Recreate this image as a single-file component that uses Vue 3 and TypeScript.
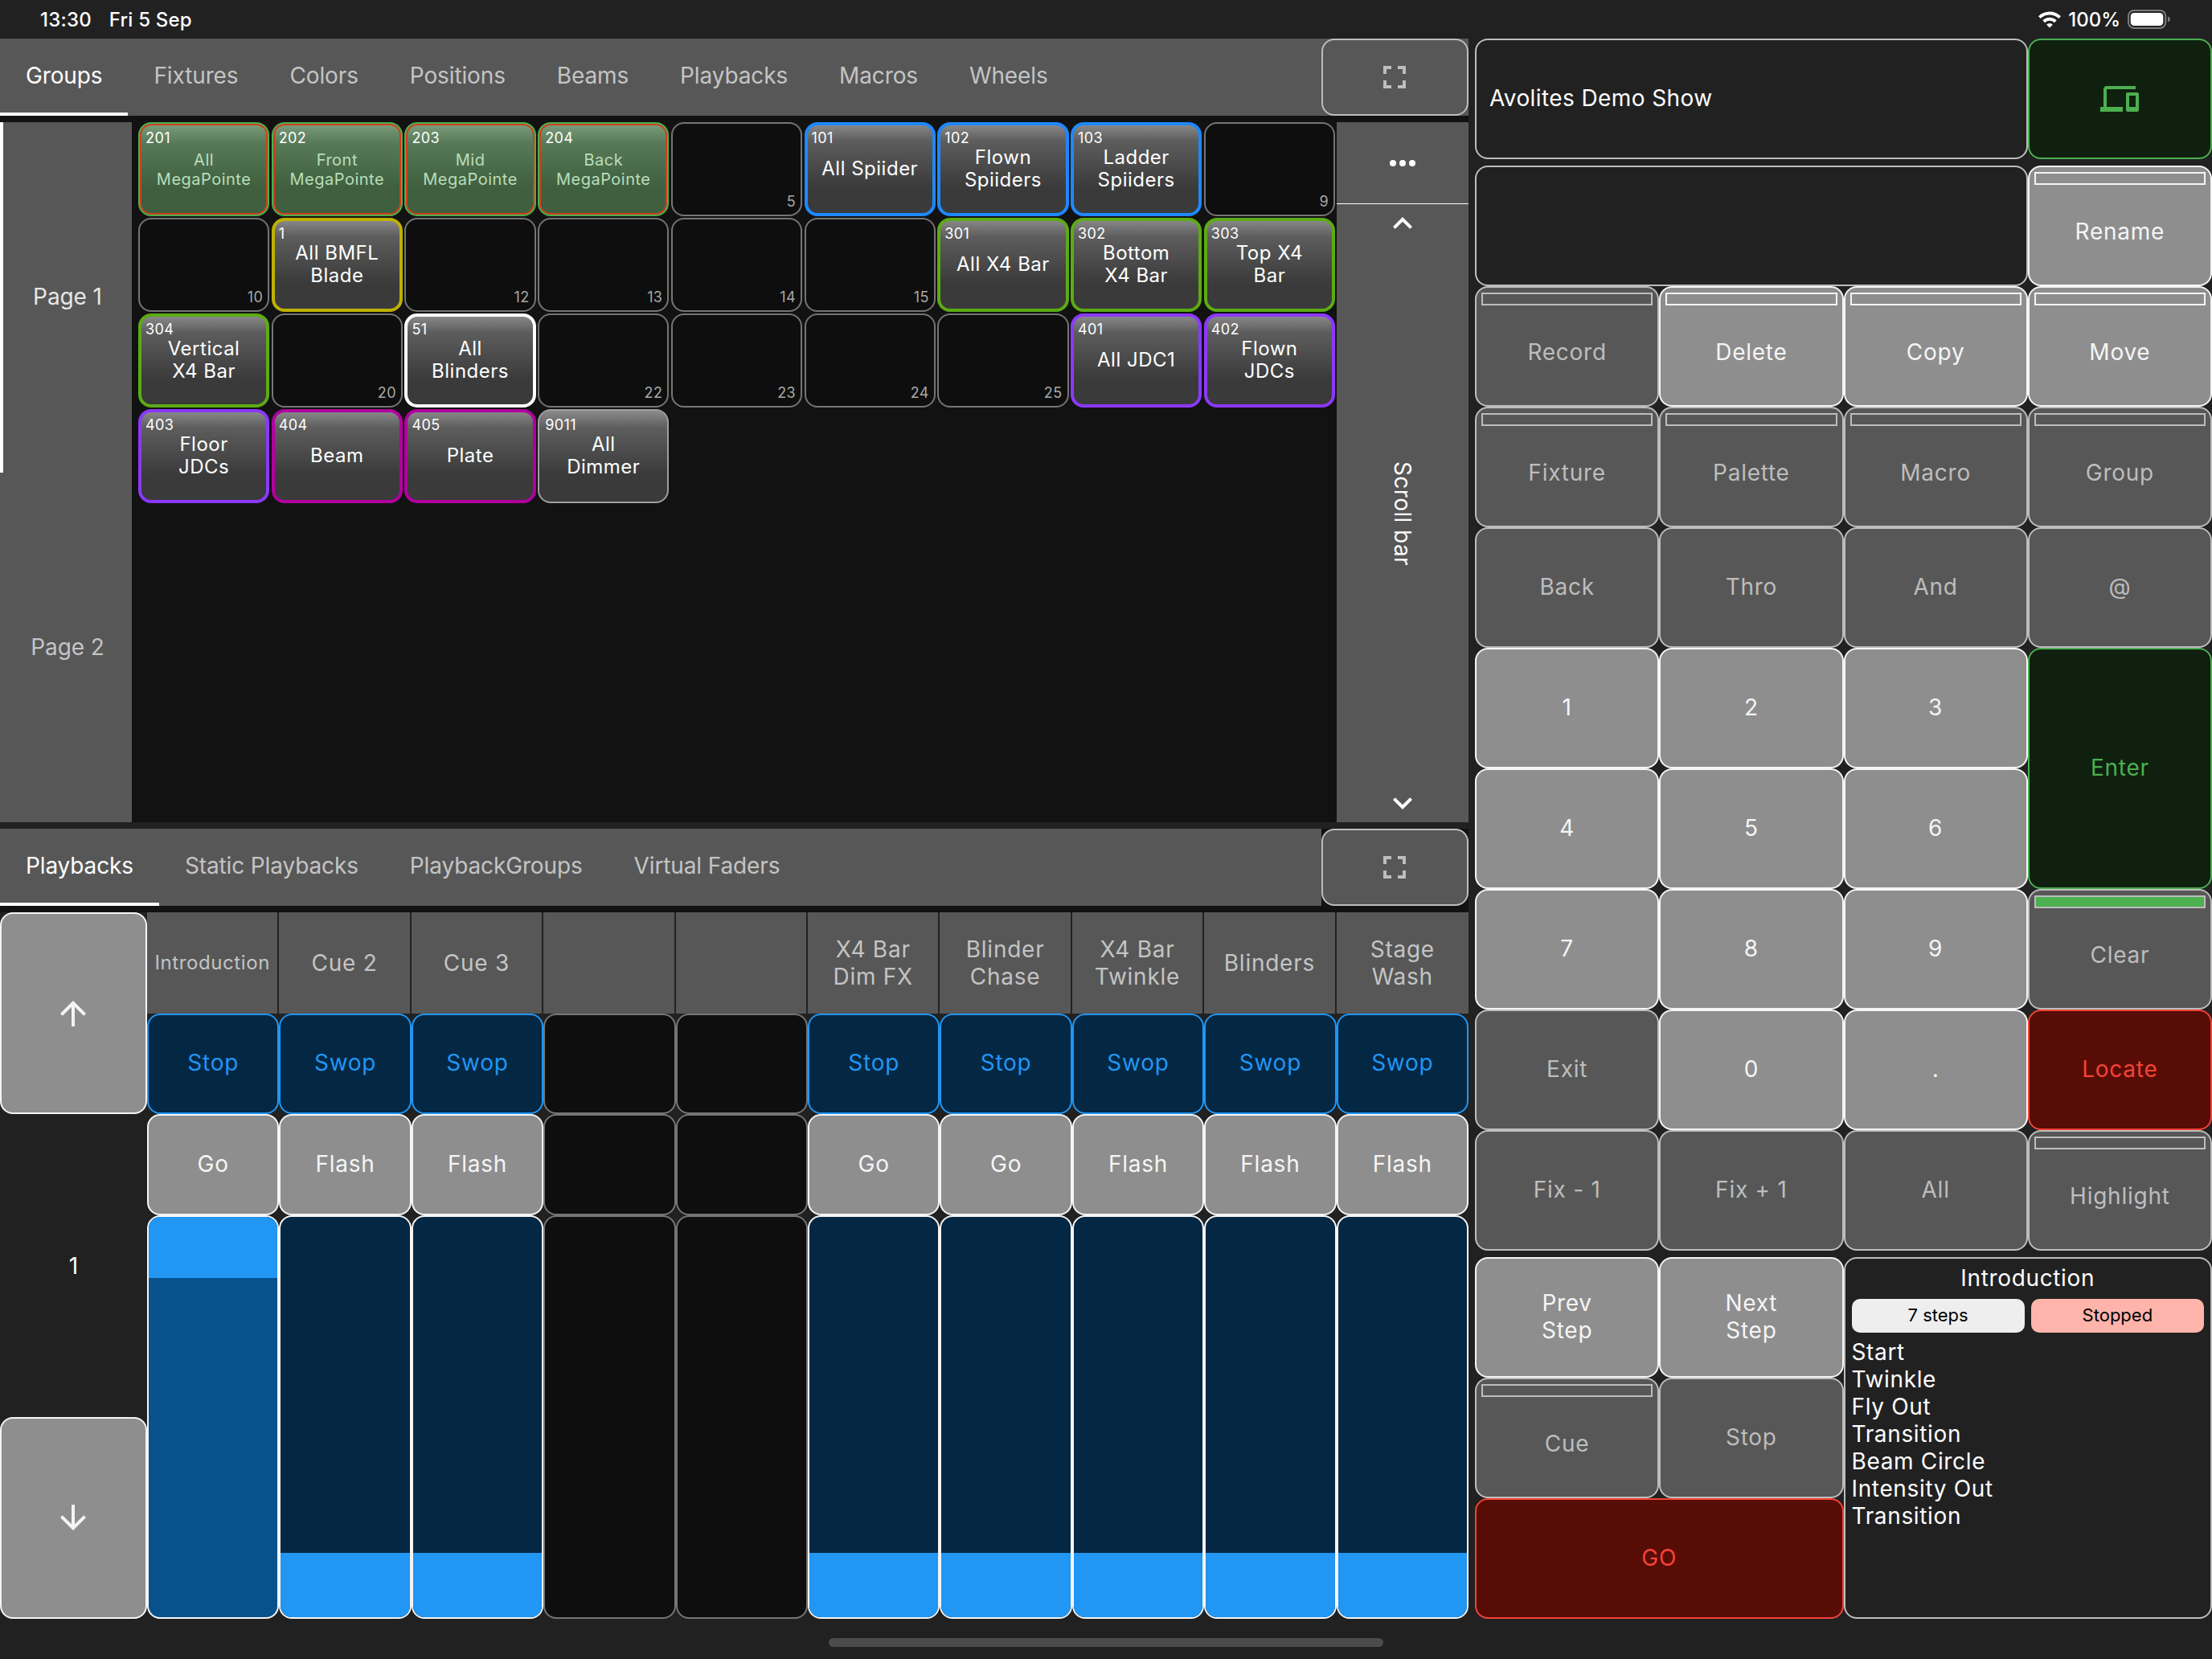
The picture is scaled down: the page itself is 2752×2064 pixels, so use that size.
<script setup lang="ts">
type Tone = 'dim' | 'lit' | 'green' | 'red'

interface Key {
  label: string
  tone: Tone
  led?: 'off' | 'on'
  tall?: boolean
}

interface Group {
  id: number
  label?: string
  color?: string
  selected?: boolean
}

interface Playback {
  name: string
  top: string
  bottom: string
  level: 'high' | 'low'
}

const groupTabs = ['Groups', 'Fixtures', 'Colors', 'Positions', 'Beams', 'Playbacks', 'Macros', 'Wheels']
const playbackTabs = ['Playbacks', 'Static Playbacks', 'PlaybackGroups', 'Virtual Faders']

const BLUE = '#1e88ff'
const LIME = '#5cab14'
const VIOLET = '#8b38ff'
const MAGENTA = '#b1009f'

const groups: Group[] = [
  { id: 201, label: 'All\nMegaPointe', selected: true },
  { id: 202, label: 'Front\nMegaPointe', selected: true },
  { id: 203, label: 'Mid\nMegaPointe', selected: true },
  { id: 204, label: 'Back\nMegaPointe', selected: true },
  { id: 5 },
  { id: 101, label: 'All Spiider', color: BLUE },
  { id: 102, label: 'Flown\nSpiiders', color: BLUE },
  { id: 103, label: 'Ladder\nSpiiders', color: BLUE },
  { id: 9 },
  { id: 10 },
  { id: 1, label: 'All BMFL\nBlade', color: '#beb100' },
  { id: 12 },
  { id: 13 },
  { id: 14 },
  { id: 15 },
  { id: 301, label: 'All X4 Bar', color: LIME },
  { id: 302, label: 'Bottom\nX4 Bar', color: LIME },
  { id: 303, label: 'Top X4\nBar', color: LIME },
  { id: 304, label: 'Vertical\nX4 Bar', color: LIME },
  { id: 20 },
  { id: 51, label: 'All\nBlinders', color: '#ffffff' },
  { id: 22 },
  { id: 23 },
  { id: 24 },
  { id: 25 },
  { id: 401, label: 'All JDC1', color: VIOLET },
  { id: 402, label: 'Flown\nJDCs', color: VIOLET },
  { id: 403, label: 'Floor\nJDCs', color: VIOLET },
  { id: 404, label: 'Beam', color: MAGENTA },
  { id: 405, label: 'Plate', color: MAGENTA },
  { id: 9011, label: 'All\nDimmer' },
]

const playbacks: (Playback | null)[] = [
  { name: 'Introduction', top: 'Stop', bottom: 'Go', level: 'high' },
  { name: 'Cue 2', top: 'Swop', bottom: 'Flash', level: 'low' },
  { name: 'Cue 3', top: 'Swop', bottom: 'Flash', level: 'low' },
  null,
  null,
  { name: 'X4 Bar Dim FX', top: 'Stop', bottom: 'Go', level: 'low' },
  { name: 'Blinder Chase', top: 'Stop', bottom: 'Go', level: 'low' },
  { name: 'X4 Bar Twinkle', top: 'Swop', bottom: 'Flash', level: 'low' },
  { name: 'Blinders', top: 'Swop', bottom: 'Flash', level: 'low' },
  { name: 'Stage Wash', top: 'Swop', bottom: 'Flash', level: 'low' },
]

const keys: Key[] = [
  { label: 'Record', tone: 'dim', led: 'off' },
  { label: 'Delete', tone: 'lit', led: 'off' },
  { label: 'Copy', tone: 'lit', led: 'off' },
  { label: 'Move', tone: 'lit', led: 'off' },
  { label: 'Fixture', tone: 'dim', led: 'off' },
  { label: 'Palette', tone: 'dim', led: 'off' },
  { label: 'Macro', tone: 'dim', led: 'off' },
  { label: 'Group', tone: 'dim', led: 'off' },
  { label: 'Back', tone: 'dim' },
  { label: 'Thro', tone: 'dim' },
  { label: 'And', tone: 'dim' },
  { label: '@', tone: 'dim' },
  { label: '1', tone: 'lit' },
  { label: '2', tone: 'lit' },
  { label: '3', tone: 'lit' },
  { label: 'Enter', tone: 'green', tall: true },
  { label: '4', tone: 'lit' },
  { label: '5', tone: 'lit' },
  { label: '6', tone: 'lit' },
  { label: '7', tone: 'lit' },
  { label: '8', tone: 'lit' },
  { label: '9', tone: 'lit' },
  { label: 'Clear', tone: 'dim', led: 'on' },
  { label: 'Exit', tone: 'dim' },
  { label: '0', tone: 'lit' },
  { label: '.', tone: 'lit' },
  { label: 'Locate', tone: 'red' },
  { label: 'Fix - 1', tone: 'dim' },
  { label: 'Fix + 1', tone: 'dim' },
  { label: 'All', tone: 'dim' },
  { label: 'Highlight', tone: 'dim', led: 'off' },
]

const cues = ['Start', 'Twinkle', 'Fly Out', 'Transition', 'Beam Circle', 'Intensity Out', 'Transition']
</script>

<template>
  <div class="screen">
    <header class="status">
      <div class="clock"><span>13:30</span><span>Fri 5 Sep</span></div>
      <div class="power">
        <svg class="wifi" viewBox="0 0 28 21">
          <path d="M14 20.6l3.9-3.9a5.6 5.6 0 0 0-7.8 0z" />
          <path d="M6.7 12.7a10.5 10.5 0 0 1 14.6 0" />
          <path d="M1.4 7.6a18 18 0 0 1 25.2 0" />
        </svg>
        <span>100%</span>
        <svg class="battery" viewBox="0 0 54 24">
          <rect x="1" y="1" width="46.3" height="22" rx="7" fill="none" stroke="#7b7b7b" stroke-width="2" />
          <rect x="3.7" y="4" width="40.6" height="16" rx="4.5" fill="#fff" />
          <path d="M50 8.5v7c4-1 4-6 0-7z" fill="#7b7b7b" />
        </svg>
      </div>
    </header>

    <main class="desk">
      <div class="left">
        <section class="pane groups-pane">
          <nav class="tabs">
            <div class="tab-list">
              <div v-for="(t, i) in groupTabs" :key="t" class="tab" :class="{ active: i === 0 }">{{ t }}</div>
            </div>
            <div class="expand">
              <svg viewBox="0 0 24 24"><path d="M7 14H5v5h5v-2H7v-3zm-2-4h2V7h3V5H5v5zm12 7h-3v2h5v-5h-2v3zM14 5v2h3v3h2V5h-5z" /></svg>
            </div>
          </nav>
          <div class="groups-body">
            <aside class="pages">
              <div class="page current">Page 1</div>
              <div class="page">Page 2</div>
            </aside>
            <div class="grid-wrap">
              <div class="grid">
                <div
                  v-for="g in groups"
                  :key="g.id"
                  class="cell"
                  :class="{ empty: !g.label, filled: g.label, selected: g.selected, colored: g.color }"
                  :style="g.color ? { borderColor: g.color } : undefined"
                >
                  <span class="num">{{ g.id }}</span>
                  <span v-if="g.label" class="name">{{ g.label }}</span>
                </div>
              </div>
            </div>
            <aside class="scroll">
              <div class="more"><i></i><i></i><i></i></div>
              <div class="track">
                <svg viewBox="0 0 24 24"><path d="M12 8l-6 6 1.41 1.41L12 10.83l4.59 4.58L18 14z" /></svg>
                <span>Scroll bar</span>
                <svg viewBox="0 0 24 24"><path d="M16.59 8.59L12 13.17 7.41 8.59 6 10l6 6 6-6z" /></svg>
              </div>
            </aside>
          </div>
        </section>

        <section class="pane playback-pane">
          <nav class="tabs split">
            <div class="tab-list">
              <div v-for="(t, i) in playbackTabs" :key="t" class="tab" :class="{ active: i === 0 }">{{ t }}</div>
            </div>
            <div class="expand">
              <svg viewBox="0 0 24 24"><path d="M7 14H5v5h5v-2H7v-3zm-2-4h2V7h3V5H5v5zm12 7h-3v2h5v-5h-2v3zM14 5v2h3v3h2V5h-5z" /></svg>
            </div>
          </nav>
          <div class="playback-body">
            <aside class="pager">
              <div class="key lit arrow">
                <svg viewBox="0 0 24 24"><path d="M4 12l1.41 1.41L11 7.83V20h2V7.83l5.58 5.59L20 12l-8-8-8 8z" /></svg>
              </div>
              <div class="page-no">1</div>
              <div class="key lit arrow">
                <svg viewBox="0 0 24 24"><path d="M20 12l-1.41-1.41L13 16.17V4h-2v12.17l-5.58-5.59L4 12l8 8 8-8z" /></svg>
              </div>
            </aside>
            <div class="faders">
              <div v-for="(p, i) in playbacks" :key="i" class="strip">
                <div class="legend" :class="{ small: p?.name === 'Introduction' }">{{ p?.name }}</div>
                <div class="key" :class="p ? 'blue' : 'void'">{{ p?.top }}</div>
                <div class="key" :class="p ? 'lit' : 'void'">{{ p?.bottom }}</div>
                <div class="fader" :class="p ? p.level : 'void'"><div v-if="p" class="handle"></div></div>
              </div>
            </div>
          </div>
        </section>
      </div>

      <aside class="right">
        <div class="row">
          <div class="panel title">Avolites Demo Show</div>
          <div class="key green icon-key">
            <svg class="devices" viewBox="0 0 24 24"><path d="M4 6h18V4H4c-1.1 0-2 .9-2 2v11H0v3h14v-3H4V6zm19 2h-6c-.55 0-1 .45-1 1v10c0 .55.45 1 1 1h6c.55 0 1-.45 1-1V9c0-.55-.45-1-1-1zm-1 9h-4v-7h4v7z" /></svg>
          </div>
        </div>
        <div class="block">
          <div class="row">
            <div class="panel"></div>
            <div class="key lit has-led"><i class="led"></i><span>Rename</span></div>
          </div>
          <div class="keys">
            <div v-for="k in keys" :key="k.label" class="key" :class="[k.tone, { tall: k.tall, 'has-led': k.led }]">
              <i v-if="k.led" class="led" :class="{ on: k.led === 'on' }"></i><span>{{ k.label }}</span>
            </div>
          </div>
        </div>
        <div class="transport">
          <div class="buttons">
            <div class="key lit"><span>Prev<br />Step</span></div>
            <div class="key lit"><span>Next<br />Step</span></div>
            <div class="key dim has-led"><i class="led"></i><span>Cue</span></div>
            <div class="key dim"><span>Stop</span></div>
            <div class="key red wide"><span>GO</span></div>
          </div>
          <div class="panel cue-list">
            <h2>Introduction</h2>
            <div class="chips">
              <div class="chip">7 steps</div>
              <div class="chip stopped">Stopped</div>
            </div>
            <div v-for="(c, i) in cues" :key="i" class="cue">{{ c }}</div>
          </div>
        </div>
      </aside>
    </main>
    <footer class="home"><i></i></footer>
  </div>
</template>

<style>
body {
  background: #212121;
}
</style>

<style scoped>
* {
  box-sizing: border-box;
}
.screen {
  width: 2752px;
  height: 2064px;
  background: #212121;
  color: #fff;
  font-family: Inter, 'Liberation Sans', sans-serif;
  font-size: 28px;
  font-weight: 400;
  display: flex;
  flex-direction: column;
  overflow: hidden;
}
.status {
  height: 48px;
  flex: none;
  display: flex;
  justify-content: space-between;
  align-items: center;
  padding: 0 51px 0 50px;
  font-size: 24px;
  font-weight: 500;
  letter-spacing: 0.2px;
}
.clock {
  display: flex;
  gap: 22px;
}
.power {
  display: flex;
  align-items: center;
  gap: 9px;
  letter-spacing: 0;
}
.wifi {
  width: 28px;
  height: 21px;
}
.wifi path {
  fill: none;
  stroke: #fff;
  stroke-width: 4;
}
.wifi path:first-child {
  fill: #fff;
  stroke: none;
}
.battery {
  width: 54px;
  height: 24px;
}
.desk {
  display: flex;
  height: 1966px;
  gap: 8px;
}
.left {
  width: 1827px;
  display: flex;
  flex-direction: column;
  gap: 8px;
}
.groups-pane {
  height: 975px;
}
.playback-pane {
  height: 983px;
}
.pane {
  background: #121212;
  display: flex;
  flex-direction: column;
  gap: 8px;
}
.tabs {
  height: 96px;
  flex: none;
  display: flex;
  justify-content: space-between;
  background: #575757;
}
.tabs.split {
  background: none;
}
.tab-list {
  flex: 1;
  display: flex;
  background: #575757;
}
.tab {
  padding: 0 32px;
  line-height: 92px;
  letter-spacing: -0.13px;
  color: #c4c4c4;
  border-bottom: 4px solid transparent;
}
.tab.active {
  color: #fff;
  border-color: #fff;
}
.expand {
  width: 183px;
  border: 2px solid #bdbdbd;
  border-radius: 16px;
  background: #575757;
  display: flex;
  align-items: center;
  padding-left: 65px;
}
.expand svg {
  width: 48px;
  height: 48px;
  fill: #bdbdbd;
}
.groups-body {
  flex: 1;
  display: flex;
}
.pages {
  width: 164px;
  display: flex;
  flex-direction: column;
}
.page {
  flex: 1;
  display: grid;
  place-items: center;
  background: #575757;
  border-left: 4px solid #575757;
  color: #c4c4c4;
  letter-spacing: -0.1px;
  padding-bottom: 1px;
}
.page.current {
  border-color: #fff;
  color: #e6e6e6;
}
.grid-wrap {
  flex: 1;
  padding: 0 2px 0 8px;
}
.grid {
  display: grid;
  grid-template-columns: repeat(9, 1fr);
  grid-auto-rows: 117px;
  gap: 2px 2.5px;
}
.cell {
  position: relative;
  border: 2px solid #757575;
  border-radius: 16px;
  background: #0e0e0e;
  display: grid;
  place-items: center;
  text-align: center;
}
.cell.filled {
  border-color: #9e9e9e;
  background: linear-gradient(#909090, #5d5d5d 20%, #3a3a3a 70%, #3a3a3a) border-box;
}
.cell.colored {
  border-width: 4px;
}
.cell.selected {
  border-color: #4caf50;
  background: linear-gradient(#7fa07f, #587a58 22%, #3f5f3e 70%, #3f5f3e) border-box;
  box-shadow: inset 0 0 0 2px #cf3f1d;
}
.num {
  position: absolute;
  left: 7px;
  top: 7px;
  font-size: 18px;
  line-height: 22px;
  letter-spacing: 0.4px;
}
.colored .num {
  left: 5px;
  top: 5px;
}
.empty .num {
  left: auto;
  top: auto;
  right: 6px;
  bottom: 5px;
  color: #a8a8a8;
}
.name {
  font-size: 24px;
  line-height: 28px;
  letter-spacing: 0.5px;
  padding-bottom: 1px;
  white-space: pre;
}
.selected .name {
  font-size: 20px;
  line-height: 24px;
  padding-bottom: 0;
  color: #b9deba;
}
.scroll {
  width: 164px;
  background: #575757;
  display: flex;
  flex-direction: column;
}
.more {
  height: 102px;
  border-bottom: 1px solid #fff;
  display: flex;
  justify-content: center;
  align-items: center;
  gap: 4px;
}
.more i {
  width: 8px;
  height: 8px;
  border-radius: 50%;
  background: #fff;
}
.track {
  flex: 1;
  display: flex;
  flex-direction: column;
  justify-content: space-between;
  align-items: center;
}
.track span {
  writing-mode: vertical-rl;
  letter-spacing: 0.4px;
}
.track svg {
  width: 48px;
  height: 48px;
  fill: #fff;
}
.playback-body {
  flex: 1;
  display: flex;
  background: #212121;
}
.pager {
  width: 183px;
  display: flex;
  flex-direction: column;
}
.key.arrow {
  height: 251px;
  padding: 0 1px 0 0;
}
.key.arrow:last-child {
  padding-bottom: 1px;
}
.arrow svg {
  width: 48px;
  height: 48px;
  fill: #f5f5f5;
}
.page-no {
  flex: 1;
  display: grid;
  place-items: center;
}
.faders {
  flex: 1;
  display: grid;
  grid-template-columns: repeat(10, 1fr);
}
.strip {
  display: grid;
  grid-template-rows: 1fr 1fr 1fr 4fr;
  min-width: 0;
}
.legend {
  background: #575757;
  border-right: 2px solid #212121;
  display: grid;
  place-items: center;
  text-align: center;
  padding: 0 16px;
  line-height: 34px;
  letter-spacing: 0.75px;
  color: #c4c4c4;
}
.strip:last-child .legend {
  border-right: 0;
}
.legend.small {
  padding: 0;
  font-size: 24px;
  letter-spacing: 0.6px;
}
.key {
  border: 2px solid;
  border-radius: 16px;
  display: flex;
  flex-direction: column;
  align-items: center;
  justify-content: center;
  text-align: center;
  line-height: 34px;
  letter-spacing: 0.75px;
  min-width: 0;
  padding-bottom: 2px;
}
.key.icon-key {
  padding: 0;
}
.lit {
  background: #8e8e8e;
  border-color: #f5f5f5;
  color: #f5f5f5;
}
.dim {
  background: #575757;
  border-color: #bdbdbd;
  color: #bdbdbd;
}
.green {
  background: #0f200f;
  border-color: #4caf50;
  color: #4caf50;
}
.red {
  background: #580c06;
  border-color: #f44336;
  color: #f44336;
}
.blue {
  background: #042743;
  border-color: #2196f3;
  color: #2196f3;
}
.void {
  background: #0e0e0e;
  border-color: #757575;
}
.fader {
  border: 2px solid #f5f5f5;
  border-radius: 16px;
  overflow: hidden;
  display: flex;
  flex-direction: column;
}
.fader.void {
  border-color: #757575;
}
.fader.low {
  background: #042743;
  justify-content: flex-end;
}
.fader.high {
  background: #07528c;
}
.handle {
  height: 80px;
  background: #2196f3;
}
.high .handle {
  height: 76px;
}
.right {
  flex: 1;
  display: flex;
  flex-direction: column;
  gap: 8px;
}
.row {
  height: 150px;
  display: grid;
  grid-template-columns: 3fr 1fr;
}
.panel {
  border: 2px solid #bdbdbd;
  border-radius: 16px;
}
.title {
  display: flex;
  align-items: center;
  padding: 0 0 2px 16px;
  letter-spacing: 0.4px;
}
.devices {
  width: 48px;
  height: 48px;
  fill: #4caf50;
}
.keys {
  display: grid;
  grid-template-columns: repeat(4, 1fr);
  grid-auto-rows: 150px;
}
.tall {
  grid-row: span 2;
}
.has-led {
  justify-content: flex-start;
}
.led {
  align-self: stretch;
  flex: none;
  height: 16px;
  margin: 6px 6px 41px;
  border: 2px solid;
}
.led.on {
  border-color: #bdbdbd;
  background: #4caf50;
}
.transport {
  display: grid;
  grid-template-columns: 1fr 1fr;
  height: 450px;
}
.buttons {
  display: grid;
  grid-template-columns: 1fr 1fr;
  grid-template-rows: repeat(3, 150px);
}
.wide {
  grid-column: span 2;
}
.cue-list {
  padding: 7px 8px;
  letter-spacing: 0.65px;
}
h2 {
  margin: 0;
  font-size: 28px;
  line-height: 34px;
  font-weight: inherit;
  text-align: center;
}
.chips {
  display: grid;
  grid-template-columns: 1fr 1fr;
  gap: 8px;
  margin: 9px 0 7px;
}
.chip {
  height: 42px;
  line-height: 41px;
  border-radius: 10px;
  background: #eee;
  color: #000;
  font-size: 22px;
  letter-spacing: 0;
  text-align: center;
}
.stopped {
  background: #ffb4ab;
}
.cue {
  line-height: 34px;
}
.home {
  flex: 1;
  display: flex;
  justify-content: center;
  padding: 24px 0 0;
}
.home i {
  width: 690px;
  height: 11px;
  border-radius: 6px;
  background: #4b4b4b;
}
</style>
